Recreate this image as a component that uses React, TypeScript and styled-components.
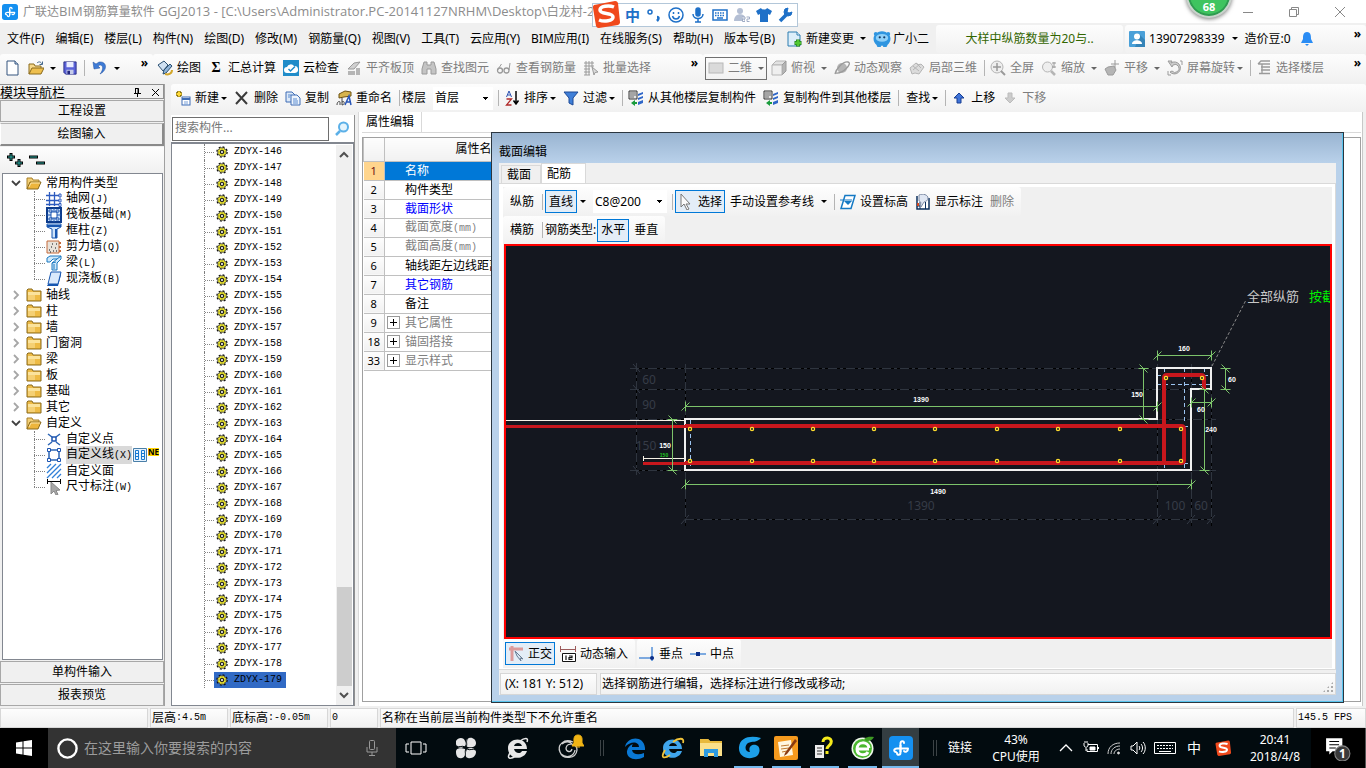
import React from 'react';
import styled, { createGlobalStyle, css } from 'styled-components';

const UI = '"Noto Sans", "Noto Sans CJK SC", sans-serif';
const MONO = '"Liberation Mono", "Noto Sans CJK SC", monospace';

const Global = createGlobalStyle`
  * { box-sizing: border-box; }
  body { margin: 0; background: #f0f0f0; color: #000; font: 12px/16px ${UI}; }
  button, input, select { font: inherit; color: inherit; border: 0; background: none; padding: 0; margin: 0; border-radius: 0; }
  button { white-space: nowrap; }
  ul { list-style: none; margin: 0; padding: 0; }
`;

/* ---------- shared parts ---------- */

const Svg = styled.svg<{ $w?: number; $h?: number }>`
  width: ${p => p.$w ?? 16}px;
  height: ${p => p.$h ?? 16}px;
  flex: none;
  display: block;
`;

const Page = styled.div`
  min-height: 100vh;
  display: flex;
  flex-direction: column;
  overflow: hidden;
`;

const panelFill = 'linear-gradient(#fdfdfd, #f1f1f1)';

const Strip = styled.div<{ $w?: number; $grow?: boolean; $pad?: number; $h?: number }>`
  display: flex;
  align-items: center;
  height: ${p => p.$h ?? 28}px;
  padding-left: ${p => p.$pad ?? 4}px;
  flex: ${p => (p.$grow ? '1 1 0' : 'none')};
  ${p => p.$w && `width: ${p.$w}px;`}
  min-width: 0;
  background: ${panelFill};
  border-radius: 3px;
  overflow: hidden;
`;

const Tool = styled.button<{ $off?: boolean; $gap?: number }>`
  display: flex;
  align-items: center;
  gap: ${p => p.$gap ?? 4}px;
  margin-right: 7px;
  flex: none;
  color: ${p => (p.$off ? '#7d7d7d' : '#000')};
`;

const Sep = styled.span<{ $after?: number }>`
  width: 1px;
  height: 16px;
  flex: none;
  background: #b4b4b4;
  margin-right: ${p => p.$after ?? 5}px;
`;

const CaretBox = styled.span<{ $w: number; $off?: boolean }>`
  width: ${p => p.$w}px;
  margin-left: -4px;
  display: flex;
  justify-content: flex-end;
  &::after {
    content: '';
    border: 3px solid transparent;
    border-bottom: 0;
    border-top-color: ${p => (p.$off ? '#666' : '#000')};
  }
`;
const Caret = ({ w = 8, off }: { w?: number; off?: boolean }) => <CaretBox $w={w} $off={off} />;

const MoreButton = styled.button`
  align-self: flex-start;
  margin: 0 5px 0 auto;
  font: bold 12px/18px ${UI};
`;

const MonoSpan = styled.span`
  font: 10px/16px ${MONO};
`;
const Mixed = ({ children }: { children: string }) => (
  <>{children.split(/([ -~]+)/).filter(Boolean).map((s, i) => (/^[ -~]/.test(s) ? <MonoSpan key={i}>{s}</MonoSpan> : s))}</>
);

/* ---------- icons ---------- */

const G = '#b5b5b5';
const GD = '#9a9a9a';
const art: Record<string, React.ReactNode> = {
  file: <><path d="M2 1h8l3 3v11H2z" fill="#fff" stroke="#34557f" /><path d="M10 1v3h3" fill="#c9d8ea" stroke="#34557f" /></>,
  open: <><path d="M1 14V3h5l1 2h6v3" fill="#f3cf75" stroke="#a8802a" /><path d="M1 14l3-7h11l-3 7z" fill="#edb53c" stroke="#8a6a1c" /><path d="M3 12l2-4h9" fill="none" stroke="#fbe6a8" /></>,
  openfile: <><path d="M1 14V4h5l1 2h6v2" fill="#f6d88a" stroke="#8a6a1c" /><path d="M1 14l3-6h12l-3 6z" fill="#eebf4e" stroke="#8a6a1c" /><path d="M9 3c2-2 4-1 5 1M14.500 1.500v3h-3" fill="none" stroke="#44688c" /></>,
  save: <><path d="M1 1h14v14H3l-2-2z" fill="#5a62d8" stroke="#23277e" /><path d="M4 1h8v6H4z" fill="#e9ecff" /><path d="M4 10h8v5H4z" fill="#c5cbe9" /><path d="M5 11h3v4H5z" fill="#23277e" /></>,
  undo: <path d="M1 2l1 7 6-1-2-2c4-3 7 2 2 8 8-4 7-13-1-12L4 4z" fill="#3e7bd6" stroke="#1f4e9e" strokeWidth=".5" />,
  draw: <><path d="M1 5l6-4 4 4-5 6z" fill="#cfe0f2" stroke="#2b5072" /><path d="M7 10l6-6 2 2-6 7-3 1z" fill="#8fb3d8" stroke="#2b5072" /><path d="M8 14c3 1 7 0 7-4" fill="none" stroke="#d3a72a" strokeWidth="2" /></>,
  cloud: <><rect width="16" height="16" fill="#1f8cc9" /><path d="M4 13a3 3 0 010-6 4 4 0 017-1 3.500 3.500 0 011 7z" fill="#fff" /><path d="M5.500 9l2 2L12 6.500" fill="none" stroke="#1f8cc9" strokeWidth="1.500" /></>,
  level: <><path d="M2 9l6-6 6-1-6 7z" fill="#d0d0d0" stroke={GD} /><path d="M2 11h7v4H2zM10 8h4v7h-4z" fill={G} /></>,
  bino: <path d="M3 2h3v3h4V2h3l2 7v5h-5V9H6v5H1V9z" fill="#c4c4c4" stroke={GD} />,
  glasses: <><circle cx="4" cy="10.500" r="2.500" fill="none" stroke={GD} strokeWidth="1.300" /><circle cx="10.500" cy="10.500" r="2.500" fill="none" stroke={GD} strokeWidth="1.300" /><path d="M1.500 10l4-6M13 10l1-7" fill="none" stroke={GD} /></>,
  batch: <><path d="M1 3h10M1 6h10M1 9h6M1 12h6M1 15h6M3 1v14M6 1v14M9 1v6" stroke={GD} /><path d="M9 7l6 5-3 .5L11 15z" fill="#ddd" stroke={GD} /></>,
  box2d: <rect x="1" y="3" width="14" height="10" fill="#dadada" stroke="#b8b8b8" />,
  cube: <><path d="M1 5l4-4h10l-4 4z" fill="#e2e2e2" stroke={G} /><path d="M11 5l4-4v10l-4 4z" fill={G} stroke={GD} /><path d="M1 5h10v10H1z" fill="#efefef" stroke={G} /></>,
  orbit: <><circle cx="8" cy="8" r="5" fill={G} /><path d="M1 14C2 9 9 1 14 2s-5 12-12 11" fill="none" stroke={GD} strokeWidth="1.300" /></>,
  part3d: <path d="M1 8l6-5 3 2 2-1 3 3-5 7-4-1-3 1z M4 6l6 5M7 3l5 5M4 10l7-6" fill="#dcdcdc" stroke={G} />,
  full: <><circle cx="7" cy="7" r="6" fill="#eee" stroke={G} /><path d="M7 3v8M3 7h8" stroke={GD} strokeWidth="1.500" /><path d="M11 11l4 4" stroke={GD} strokeWidth="2" /></>,
  zoom: <><circle cx="6.500" cy="7" r="5" fill="#eee" stroke={G} /><path d="M10 11l4 4" stroke={G} strokeWidth="2.500" /><path d="M13 2v6M11 3h4M11 7h4" stroke={GD} /></>,
  pan: <><path d="M1 9l3-2 6-1 2 4-3 5H4z" fill={G} stroke={GD} /><path d="M11 0v8M7 4h8" stroke={GD} /></>,
  rotate: <><path d="M1 1h4l-1 2a6 6 0 11-1 9l2-1a4 4 0 101-6l-1 2z" fill="#ccc" stroke={GD} /><path d="M13 1h2v4M1 11v4h3" fill="none" stroke={GD} /></>,
  floors: <path d="M2 4h12M5 7h9M5 10h9M3 13.500h11M2 4l3-3h9M6 4v9" stroke={GD} strokeWidth="1.300" fill="none" />,
  addnew: <><path d="M4 1v6M1 4h6" stroke="#7a6400" strokeWidth="3.500" /><path d="M4 1.500v5M1.500 4h5" stroke="#ffd93a" strokeWidth="2" /><rect x="7" y="7" width="8" height="8" fill="#fff" stroke="#3f6db5" /><path d="M7 9h8" stroke="#3f6db5" strokeWidth="2" /><path d="M9 12h4M9 14h4" stroke="#7aa1d9" /></>,
  del: <path d="M2 2l11 12M13 2L2 14" stroke="#3b3b3b" strokeWidth="2" />,
  copy: <><path d="M1 2h6l3 3v7H1z" fill="#dce9f8" stroke="#3f6db5" /><path d="M6 5h6l3 3v7H6z" fill="#eef5fd" stroke="#3f6db5" /><path d="M8 9h4M8 11h5M8 13h5M3 5h3M3 7h2" stroke="#5b8bd0" /></>,
  rename: <><path d="M3 4l6-3 6 1v4l-7 1-5 1z" fill="#d7b44d" stroke="#6d5212" /><path d="M1 15c0-4 3-4 3-3v3M6 8v7M6 12c3-2 3 3 0 3" fill="none" stroke="#444" /><path d="M9 15l4-9 2 9M10 12h4" fill="none" stroke="#2a57b8" strokeWidth="1.500" /></>,
  sort: <><path d="M2.500 7L5 1l2.500 6M3.500 5h3" fill="none" stroke="#2a50b0" /><path d="M2.500 9h5l-5 6h5" fill="none" stroke="#b02a2a" strokeWidth="1.300" /><path d="M12 1v12M9.500 10.500L12 14l2.500-3.500" fill="none" stroke="#000" strokeWidth="1.500" /></>,
  filter: <path d="M1 2h14l-5 6v7l-4-2V8z" fill="#3f7fd8" stroke="#1e4a96" />,
  floorcopy: <><path d="M1 1h8v8H1z" fill="#e4e4e4" stroke="#333" /><path d="M2 3h6M2 5h6M2 7h4" stroke="#666" /><path d="M10 4l5-2v2l-5 2zM10 8l5-2v2l-5 2zM10 12l5-2v3l-5 2z" fill="#2f66c8" /><path d="M3 13l4-3v2h2v2H7v2z" fill="#1a9c3c" /></>,
  up: <path d="M8 3l5 5h-3v5H6V8H3z" fill="#3f73d8" stroke="#183f93" />,
  down: <path d="M8 13l5-5h-3V3H6v5H3z" fill="#ccc" stroke="#bbb" />,
  newdoc: <><path d="M1 1h9l3 3v11H1z" fill="#dceefa" stroke="#2c7db0" /><path d="M10 1v3h3" fill="#fff" stroke="#2c7db0" /><path d="M11 8.500v7M7.500 12h7" stroke="#1f7a1f" strokeWidth="4" /><path d="M11 9v6M8 12h6" stroke="#52c832" strokeWidth="2.500" /></>,
  mascot: <><path d="M2 4c3-4 9-4 12 0 3 3 1 8-1 9l-1 2H9v-1H7v1H4l-1-2C1 12-1 7 2 4z" fill="#2f95e0" /><circle cx="2.500" cy="3.500" r="1.800" fill="#2f95e0" /><circle cx="13.500" cy="3.500" r="1.800" fill="#2f95e0" /><ellipse cx="8" cy="7" rx="5.500" ry="3.500" fill="#8fd0f8" /><circle cx="6" cy="6.500" r="1" fill="#143b66" /><circle cx="10" cy="6.500" r="1" fill="#143b66" /></>,
  user: <><rect width="16" height="16" rx="1" fill="#4aa0d8" /><path d="M11 4l5 5v7H6z" fill="#3584b8" /><circle cx="8" cy="5.500" r="3" fill="#fff" /><path d="M3 13c0-5 10-5 10 0z" fill="#fff" /></>,
  bell: <path d="M8 1c4 0 4 4 4 7l2 4H2l2-4c0-3 0-7 4-7zM6 13h4l-2 2z" fill="#2a8cf4" />,
  axis: <><path d="M3.500 1v14M8.500 1v14M0 4.500h13M0 9.500h13M0 13.500h13" stroke="#2d5bbf" strokeWidth="1.300" /><path d="M13 3h2v3h-2zM13 8h2v3h-2zM13 12.500h2v3h-2z" fill="#fff" stroke="#2d5bbf" /></>,
  raft: <><path d="M1 1h14v14H1z" fill="#cfe4fb" stroke="#0d3c8c" strokeWidth="2" /><path d="M5 5h6v6H5zM8 1v4M8 11v4M1 8h4M11 8h4M3 3h3v2H3zM10 3h3v2h-3zM3 11h3v2H3zM10 11h3v2h-3z" fill="#fff" stroke="#1d54b0" /></>,
  column: <><path d="M1 1h14v3l-4 2v9H6V6L1 4z" fill="#cfe4fb" stroke="#1756b0" /><path d="M1 3h14M10 6v9" stroke="#1756b0" strokeWidth="2" /></>,
  wall: <><path d="M1 2h12v12H1z" fill="#e8e2da" stroke="#c46a3a" /><path d="M3 11h1M5 8h1M7 12h1M9 9h1M10 5h1M6 5h1M4 13h1M10 12h1" stroke="#555" strokeWidth="1.500" /><path d="M14 3v2M14 7v2M14 11v2" stroke="#c46a3a" strokeWidth="2" /></>,
  beam: <path d="M1 3l3-2h11v3l-4 4v7H6V8l5-4H7L4 7H1zM11 4l4-3M6 8l4-1M8 9v5" fill="#cfe9fb" stroke="#1a78c0" />,
  slab: <><path d="M5 1h10l-3 12H2z" fill="#dbe9fb" stroke="#1756b0" /><path d="M2 13h10l3-12v3l-3 11H1z" fill="#1756b0" /></>,
  point: <><path d="M2 3l4 3M14 3l-4 3M2 14l4-3M14 14l-4-3" stroke="#2c65b5" strokeWidth="1.500" /><path d="M6 6h4v4H6z" fill="#fff" stroke="#1d54b0" strokeWidth="1.500" /></>,
  line: <><path d="M3 3h10v10H3z" fill="none" stroke="#2c65b5" strokeWidth="1.500" /><path d="M1.500 1.500h3v3h-3zM11.500 1.500h3v3h-3zM1.500 11.500h3v3h-3zM11.500 11.500h3v3h-3z" fill="#fff" stroke="#1d54b0" /></>,
  area: <path d="M1 5l4-4M1 10l9-9M1 15L15 1M6 15l9-9M11 15l4-4" stroke="#2f7fd8" strokeWidth="1.300" />,
  dimen: <><path d="M1.500 0v5M14.500 0v5M1 2.500h13" stroke="#000" /><path d="M5 3l9 8-4 .5 2 4-2 .5-2-4-3 3z" fill="#a8a8a8" stroke="#888" /></>,
  folder: <><path d="M1 14V3l1-1h4l1 2h8v10z" fill="#eebb45" stroke="#8a6a1c" /><path d="M2 5h12v3H2z" fill="#fbe39c" /><path d="M2 8h7v5H2z" fill="#f5d074" /></>,
  gear: <><circle cx="8" cy="8" r="5.800" fill="none" stroke="#111" strokeWidth="1.600" strokeDasharray="2.300 2.250" /><circle cx="8" cy="8" r="5" fill="#f5ee22" stroke="#444" strokeWidth=".8" /><path d="M8 3v10M3 8h10M4.500 4.500l7 7M11.500 4.500l-7 7" stroke="#555" strokeWidth=".6" /><circle cx="8" cy="8" r="1.800" fill="#fff" stroke="#111" strokeWidth="1.200" /></>,
  search: <><circle cx="9.500" cy="6" r="4.500" fill="#e4f4fd" stroke="#5bb0e8" strokeWidth="2" /><path d="M6 10l-4 4" stroke="#5bb0e8" strokeWidth="2.500" /></>,
  cursor: <path d="M3 0v13l3-3 3 6 2-1-3-5h4z" fill="#fafafa" stroke="#777" />,
  elev: <><path d="M5 1.500h10l-4 13H1z" fill="#fff" stroke="#1479c4" strokeWidth="1.500" /><path d="M0 6h12" stroke="#1479c4" /><path d="M4 7h8l-4 4z" fill="#1479c4" /></>,
  label: <><path d="M2 2v13h12V4" fill="#fff" stroke="#0b2f5c" strokeWidth="1.500" /><path d="M2 12h3M5 8v7M10.500 8v7" stroke="#0b2f5c" /><path d="M4 1c4-2 9 0 9 3s-2 3-4 4l-3 5c-1-4 1-5-2-6z" fill="#dfe6f2" stroke="#7f8ca5" /><path d="M2 9h2v3H2z" fill="#d2461e" /></>,
  ortho: <><path d="M1 3h14M4 0v15" stroke="#dc9a9a" strokeWidth="3" /><path d="M7 5l8 8-3-1 1 3-4-5z" fill="#d8e4f0" stroke="#6a7f96" /></>,
  dyn: <><path d="M.5 0v6M15.500 0v6M0 3.500h16" stroke="#9c5a5a" /><path d="M2.500 7.500h13v8h-13z" fill="#fff" stroke="#111" /><path d="M6 9.500v4.500M9 10h3v1.700H9v1.800h3.500" fill="none" stroke="#111" strokeWidth="1.200" /></>,
  perp: <><path d="M0 12h15M13 1v14" stroke="#5590d8" strokeWidth="1.500" /><circle cx="13" cy="12" r="2" fill="#0b2f8a" /></>,
  mid: <><path d="M0 8h16" stroke="#5590d8" strokeWidth="1.500" /><rect x="6" y="6" width="4" height="4" fill="#0b2f8a" /></>,
};
const Icon = ({ n, s = 16 }: { n: string; s?: number }) => (
  <Svg viewBox="0 0 16 16" $w={s} $h={s} aria-hidden="true">{art[n]}</Svg>
);

/* ---------- title bar ---------- */

const TitleBar = styled.header`
  position: relative;
  height: 23px;
  flex: none;
  background: #fff;
  display: flex;
  align-items: center;
  gap: 5px;
  padding-left: 2px;
  color: #8c8c8c;
`;
const TitleText = styled.span`
  white-space: nowrap;
`;
const TitleLatin = styled.span`
  font: 13px/16px "Open Sans", sans-serif;
`;
const WindowButtons = styled.div`
  margin-left: auto;
  display: flex;
  gap: 30px;
  padding-right: 18px;
`;
const InputBar = styled.div`
  position: absolute;
  z-index: 3;
  left: 592px;
  top: 3px;
  width: 206px;
  height: 24px;
  padding-left: 32px;
  display: flex;
  align-items: center;
  gap: 6px;
  background: #fff;
  border: 1px solid #b3c7d9;
  color: #1e70c8;
  font-weight: bold;
  font-size: 15px;
`;
const SogouBig = styled.div`
  position: absolute;
  left: -1px;
  top: -4px;
`;
const Ball = styled.div`
  position: absolute;
  z-index: 3;
  right: 134px;
  top: -28px;
  width: 46px;
  height: 46px;
  border-radius: 50%;
  background: #3fc45f;
  border: 2px solid #c9d3cc;
  box-shadow: 0 1px 4px #777, inset 0 0 0 2px #2f9a50;
  color: #fff;
  text-align: center;
  font: bold 11px/16px ${UI};
  padding-top: 25px;
`;

const SogouMark = ({ size }: { size: number }) => (
  <Svg viewBox="0 0 28 28" $w={size} $h={size}>
    <path d="M2 5l21-4a3 3 0 013 2l2 19a3 3 0 01-2 3L7 28a3 3 0 01-3-2L1 8a3 3 0 011-3z" fill="#f0491c" />
    <path d="M22 7c-5-2-14-1-14 3 0 5 13 2 13 7 0 4-9 5-14 3" fill="none" stroke="#fff" strokeWidth="3.500" />
  </Svg>
);
const AppMark = ({ size }: { size: number }) => (
  <Svg viewBox="0 0 24 24" $w={size} $h={size}>
    <rect width="24" height="24" rx="4" fill="#1590f0" />
    <path d="M15 7C15 4.500 11.500 4.500 11.500 7.500V16.500C11.500 19.500 8 19.500 8 17M19 12.500H8C4.500 12.500 4.500 16 7 16M19 12.500C19 16 16 16.500 15 15" fill="none" stroke="#fff" strokeWidth="2" strokeLinecap="round" />
    <path d="M11.500 9v7" stroke="#fff" strokeWidth="2" />
  </Svg>
);

const TopBar = () => (
  <TitleBar>
    <AppMark size={16} />
    <TitleText>
      广联达<TitleLatin>BIM</TitleLatin>钢筋算量软件
      <TitleLatin> GGJ2013 - [C:\Users\Administrator.PC-20141127NRHM\Desktop\</TitleLatin>白龙村<TitleLatin>-20</TitleLatin>
    </TitleText>
    <InputBar>
      <SogouBig><SogouMark size={28} /></SogouBig>
      <span>中</span>
      <Svg viewBox="0 0 16 16" fill="none" stroke="#1e70c8" strokeWidth="1.500"><circle cx="4" cy="5" r="2" /><path d="M11 10c2 0 2 2 0 4" strokeWidth="2.500" /></Svg>
      <Svg viewBox="0 0 16 16" fill="none" stroke="#1e70c8" strokeWidth="1.500"><circle cx="8" cy="8" r="7" /><path d="M4.500 9c1 4 6 4 7 0M5.500 5v2M10.500 5v2" /></Svg>
      <Svg viewBox="0 0 16 16" fill="none" stroke="#1e70c8" strokeWidth="1.500"><rect x="6" y="1" width="4" height="8" rx="2" fill="#1e70c8" /><path d="M3 7c0 6 10 6 10 0M8 12v3M5 15h6" /></Svg>
      <Svg viewBox="0 0 16 16" fill="none" stroke="#1e70c8" strokeWidth="1.500"><rect x="1" y="3" width="14" height="10" /><path d="M3 6h10M3 8.500h10" strokeDasharray="1.500 1" /><path d="M5 11h6" /></Svg>
      <Svg viewBox="0 0 16 16" fill="#b4bfd4"><circle cx="6" cy="4" r="3" /><path d="M0 14c0-9 11-8 11-3v3z" /><path d="M8 10h3v2H8.500v2.500H11M12.500 10h3v2H13v2.500h2.500" fill="#fff" stroke="#9fabc4" /></Svg>
      <Svg viewBox="0 0 16 16" fill="#1e70c8"><path d="M5 1c1 2 5 2 6 0l5 3-2 4-2-1v8H4V7L2 8 0 4z" /></Svg>
      <Svg viewBox="0 0 16 16" fill="none" stroke="#1e70c8"><path d="M2 14l6-6" strokeWidth="3.500" /><path d="M14 5a4 4 0 11-4-4l-1 4 2 1z" fill="#1e70c8" /></Svg>
    </InputBar>
    <Ball>68</Ball>
    <WindowButtons>
      <button aria-label="最小化"><Svg viewBox="0 0 16 16" stroke="#888"><path d="M3 8.500h10" /></Svg></button>
      <button aria-label="还原"><Svg viewBox="0 0 16 16" stroke="#888" fill="none"><path d="M3.500 5.500h7v7h-7zM5.500 5V3.500h7v7H11" /></Svg></button>
      <button aria-label="关闭"><Svg viewBox="0 0 16 16" stroke="#888"><path d="M3 3l10 10M13 3L3 13" /></Svg></button>
    </WindowButtons>
  </TitleBar>
);

/* ---------- menu and tool bars ---------- */

const MenuRow = styled.nav`
  height: 31px;
  flex: none;
  display: flex;
  align-items: center;
  padding-left: 7px;
`;
const MenuItems = styled.div`
  display: flex;
  gap: 11px;
  margin-right: 12px;
`;
const Tip = styled(Strip)`
  width: 187px;
  justify-content: center;
  padding: 0;
  margin: 0 2px 0 0;
  color: #336600;
`;
const BarRow = styled.div`
  display: flex;
  flex: none;
  height: 30px;
`;
const DimBox = styled.button`
  display: flex;
  align-items: center;
  gap: 4px;
  width: 62px;
  height: 23px;
  margin-right: 4px;
  padding-left: 2px;
  flex: none;
  border: 1px solid #707070;
  color: #7d7d7d;
`;
const Picker = styled.select<{ $w: number }>`
  appearance: none;
  width: ${p => p.$w}px;
  height: 23px;
  padding: 0 2px;
  margin-right: 5px;
  flex: none;
  background: linear-gradient(#000, #000) right 5px top 10px / 5px 1px no-repeat,
    linear-gradient(#000, #000) right 6px top 11px / 3px 1px no-repeat,
    linear-gradient(#000, #000) right 7px top 12px / 1px 1px no-repeat, #fff;
`;

const menus = ['文件(F)', '编辑(E)', '楼层(L)', '构件(N)', '绘图(D)', '修改(M)', '钢筋量(Q)', '视图(V)', '工具(T)', '云应用(Y)', 'BIM应用(I)', '在线服务(S)', '帮助(H)', '版本号(B)'];

const Menu = () => (
  <MenuRow>
    <MenuItems>{menus.map(m => <button key={m}>{m}</button>)}</MenuItems>
    <Tool $gap={3}><Icon n="newdoc" /><span>新建变更</span><Caret w={13} /></Tool>
    <Tool $gap={2}><Icon n="mascot" s={18} />广小二</Tool>
    <Tip>大样中纵筋数量为20与..</Tip>
    <Strip $grow>
      <Tool><Icon n="user" /><span>13907298339</span><Caret w={13} /></Tool>
      <Tool $gap={8}>造价豆:0<Icon n="bell" /></Tool>
      <MoreButton>»</MoreButton>
    </Strip>
  </MenuRow>
);

type T = [string, string, number?];
const editTools: T[] = [['draw', '绘图'], ['sum', '汇总计算'], ['cloud', '云检查']];
const offTools: T[] = [['level', '平齐板顶'], ['bino', '查找图元'], ['glasses', '查看钢筋量'], ['batch', '批量选择']];
const SumGlyph = styled.span`
  width: 16px;
  text-align: center;
  font: bold 14px/16px "Liberation Serif", serif;
`;

const ToolButton = ({ t: [icon, text, caret], off }: { t: T; off?: boolean }) => (
  <Tool $off={off}>
    {icon === 'sum' ? <SumGlyph>Σ</SumGlyph> : <Icon n={icon} />}
    <span>{text}</span>
    {caret && <Caret w={caret} off={off} />}
  </Tool>
);

const MainTools = () => (
  <BarRow>
    <Strip $w={153} $pad={5}>
      <Tool aria-label="新建"><Icon n="file" /></Tool>
      <Tool aria-label="打开" $gap={8}><Icon n="openfile" /><Caret w={8} /></Tool>
      <Tool aria-label="保存"><Icon n="save" s={14} /></Tool>
      <Sep $after={7} />
      <Tool aria-label="撤销" $gap={8}><Icon n="undo" /><Caret w={8} /></Tool>
      <MoreButton>»</MoreButton>
    </Strip>
    <Strip $w={550}>
      {editTools.map(t => <ToolButton key={t[1]} t={t} />)}
      {offTools.map(t => <ToolButton key={t[1]} t={t} off />)}
      <MoreButton>»</MoreButton>
    </Strip>
    <Strip $grow $pad={2}>
      <DimBox><Icon n="box2d" /><span>二维</span><Caret w={12} off /></DimBox>
      <ToolButton off t={['cube', '俯视', 12]} />
      <ToolButton off t={['orbit', '动态观察']} />
      <ToolButton off t={['part3d', '局部三维']} />
      <Sep />
      <ToolButton off t={['full', '全屏']} />
      <ToolButton off t={['zoom', '缩放', 12]} />
      <ToolButton off t={['pan', '平移', 12]} />
      <ToolButton off t={['rotate', '屏幕旋转', 8]} />
      <Sep />
      <ToolButton off t={['floors', '选择楼层']} />
      <MoreButton>»</MoreButton>
    </Strip>
  </BarRow>
);

const PartTools = () => (
  <Strip $h={28}>
    <ToolButton t={['addnew', '新建', 8]} />
    <ToolButton t={['del', '删除']} />
    <ToolButton t={['copy', '复制']} />
    <ToolButton t={['rename', '重命名']} />
    <Sep $after={2} />
    <Tool as="label" htmlFor="floor">楼层</Tool>
    <Picker id="floor" $w={60}><option>首层</option></Picker>
    <Sep />
    <ToolButton t={['sort', '排序', 8]} />
    <ToolButton t={['filter', '过滤', 8]} />
    <Sep />
    <ToolButton t={['floorcopy', '从其他楼层复制构件']} />
    <ToolButton t={['floorcopy', '复制构件到其他楼层']} />
    <Sep $after={7} />
    <Tool><span>查找</span><Caret /></Tool>
    <Sep />
    <ToolButton t={['up', '上移']} />
    <ToolButton off t={['down', '下移']} />
  </Strip>
);

/* ---------- navigation panel ---------- */

const Main = styled.div`
  flex: 1;
  display: flex;
  gap: 6px;
  min-height: 0;
`;
const Nav = styled.aside`
  width: 165px;
  flex: none;
  display: flex;
  flex-direction: column;
  gap: 1px;
  border-right: 1px solid #a0a0a0;
`;
const NavTitle = styled.div`
  height: 15px;
  display: flex;
  align-items: center;
  border: 1px solid #909090;
  border-left: 0;
  padding-right: 2px;
  font-size: 13px;
  button:first-of-type { margin-left: auto; margin-right: 6px; }
`;
const NavButton = styled.button<{ $on?: boolean }>`
  height: ${p => (p.$on ? 23 : 22)}px;
  flex: none;
  border: 1px solid #a8a8a8;
  ${p => p.$on && css`border-width: 1px 2px 2px 1px; border-color: #b5b5b5 #8a8a8a #8a8a8a #fff;`}
  background: #f0f0f0;
`;
const NavTools = styled.div`
  height: 25px;
  flex: none;
  display: flex;
  align-items: center;
  gap: 6px;
  padding-left: 7px;
  background: ${panelFill};
`;
const Tree = styled.ul`
  flex: 1;
  margin: 0 1px 0 2px;
  padding-top: 1px;
  border: 1px solid #828790;
  background: #fff;
`;
const Node = styled.li<{ $leaf?: boolean; $last?: boolean }>`
  position: relative;
  display: flex;
  align-items: center;
  gap: 4px;
  height: 16px;
  padding-left: ${p => (p.$leaf ? 43 : 7)}px;
  white-space: nowrap;
  ${p => p.$leaf && css`
    background: repeating-linear-gradient(90deg, #808080 0 1px, transparent 1px 2px) 31px 8px / 11px 1px no-repeat;
    &::before {
      content: '';
      position: absolute;
      left: 31px;
      top: 0;
      height: ${p.$last ? 8 : 16}px;
      border-left: 1px dotted #808080;
    }
  `}
`;
const NodeLabel = styled.span<{ $on?: boolean }>`
  ${p => p.$on && css`background: #d9d9d9;`}
`;
const Chevron = ({ open }: { open?: boolean }) => (
  <Svg viewBox="0 0 12 12" $w={12} $h={12} fill="none" strokeWidth="1.800" stroke={open ? '#404040' : '#a6a6a6'}>
    <path d={open ? 'M2 4l4 4 4-4' : 'M4 2l4 4-4 4'} />
  </Svg>
);
const NewFlag = styled.span`
  font: bold 8px/8px ${UI};
  background: #ffd200;
  margin: 0 0 6px -3px;
`;

const common: [string, string][] = [['axis', '轴网(J)'], ['raft', '筏板基础(M)'], ['column', '框柱(Z)'], ['wall', '剪力墙(Q)'], ['beam', '梁(L)'], ['slab', '现浇板(B)']];
const closed = ['轴线', '柱', '墙', '门窗洞', '梁', '板', '基础', '其它'];
const custom: [string, string][] = [['point', '自定义点'], ['line', '自定义线(X)'], ['area', '自定义面'], ['dimen', '尺寸标注(W)']];

const Leaves = ({ items }: { items: [string, string][] }) => (
  <>{items.map(([icon, text], i) => (
    <Node key={text} $leaf $last={i === items.length - 1}>
      <Icon n={icon} />
      <NodeLabel $on={icon === 'line'}><Mixed>{text}</Mixed></NodeLabel>
      {icon === 'line' && <>
        <PairMark />
        <NewFlag>NE</NewFlag>
      </>}
    </Node>
  ))}</>
);
const PairSvg = styled(Svg)`
  margin-left: -3px;
`;
const PairMark = () => (
  <PairSvg viewBox="0 0 14 14" $w={14} $h={14} fill="#e6f3ff" stroke="#1779d0">
    <path d="M.5.5h13v13H.5z" stroke="#4a7fa8" /><path d="M2.500 2.500h3v9h-3zM8.500 2.500h3v9h-3zM2.500 5.500h3M8.500 5.500h3M2.500 8.500h3M8.500 8.500h3" />
  </PairSvg>
);

const NavPanel = () => (
  <Nav>
    <NavTitle>
      模块导航栏
      <button aria-label="固定"><Svg viewBox="0 0 12 12" $w={12} $h={12} stroke="#000" fill="none"><path d="M4.500 2.500h3v5M4.500 2v5M7 2.500v5M3 7.500h7M6.500 8v3" /></Svg></button>
      <button aria-label="关闭"><Svg viewBox="0 0 12 12" $w={12} $h={12} stroke="#000"><path d="M3 3l7 7M10 3l-7 7" /></Svg></button>
    </NavTitle>
    <NavButton>工程设置</NavButton>
    <NavButton $on>绘图输入</NavButton>
    <NavTools>
      <button aria-label="全部展开"><Svg viewBox="0 0 16 16"><path d="M4 1v8M0 5h8M12 7v8M8 11h8" stroke="#000" strokeWidth="3" /><path d="M4 2v6M1 5h6M12 8v6M9 11h6" stroke="#2aa8a0" /></Svg></button>
      <button aria-label="全部折叠"><Svg viewBox="0 0 16 16"><path d="M0 5h9M7 11h9" stroke="#000" strokeWidth="3" /><path d="M1 5h7M8 11h7" stroke="#2aa8a0" /></Svg></button>
    </NavTools>
    <Tree>
      <Node><Chevron open /><Icon n="open" /><Mixed>常用构件类型</Mixed></Node>
      <Leaves items={common} />
      {closed.map(c => <Node key={c}><Chevron /><Icon n="folder" />{c}</Node>)}
      <Node><Chevron open /><Icon n="open" />自定义</Node>
      <Leaves items={custom} />
    </Tree>
    <NavButton>单构件输入</NavButton>
    <NavButton>报表预览</NavButton>
  </Nav>
);

/* ---------- component list ---------- */

const Work = styled.div`
  flex: 1;
  min-width: 0;
  display: flex;
  flex-direction: column;
`;
const Columns = styled.div`
  flex: 1;
  display: flex;
  min-height: 0;
`;
const Parts = styled.section`
  width: 184px;
  margin: 3px 3px 0 0;
  flex: none;
  display: flex;
  flex-direction: column;
  border-right: 1px solid #909090;
`;
const SearchRow = styled.div`
  display: flex;
  align-items: center;
  gap: 5px;
  height: 27px;
  padding: 2px 1px 1px;
  background: #fff;
  input {
    width: 157px;
    height: 24px;
    border: 1px solid #6e6e6e;
    padding: 0 2px 4px;
    font-size: 12px;
  }
  input::placeholder { color: #777; opacity: 1; }
`;
const ListBox = styled.div`
  flex: 1;
  display: flex;
  border: 1px solid #828790;
  border-top-width: 2px;
  background: #fff;
`;
const PartList = styled.ul`
  flex: 1;
`;
const PartRow = styled.li<{ $on?: boolean }>`
  display: flex;
  height: 16px;
  margin-left: 32px;
  padding-left: 9px;
  border-left: 1px dotted #808080;
  background: linear-gradient(90deg, #888 50%, transparent 0) 0 8px / 2px 1px repeat-x;
  button {
    display: flex;
    align-items: center;
    gap: 5px;
    padding: 0 4px 0 1px;
    font: 10px/16px ${MONO};
    background: ${p => (p.$on ? '#316ac5' : '#fff')};
    flex: none;
  }
  &::after { content: ''; flex: 1; background: #fff; }
`;
const Scroll = styled.div`
  width: 16px;
  margin: 1px 1px 0 0;
  display: flex;
  flex-direction: column;
  align-items: center;
  justify-content: space-between;
  background: #f0f0f0;
  padding: 4px 0;
`;
const Thumb = styled.span`
  width: 15px;
  height: 99px;
  margin: auto 0 3px;
  background: #cdcdcd;
`;

const PartsPanel = () => (
  <Parts>
    <SearchRow><input aria-label="搜索构件" placeholder="搜索构件..." /><button aria-label="搜索"><Icon n="search" /></button></SearchRow>
    <ListBox>
      <PartList>
        {Array.from({ length: 34 }, (_, i) => (
          <PartRow key={i} $on={i === 33}><button><Icon n="gear" s={14} />ZDYX-{146 + i}</button></PartRow>
        ))}
      </PartList>
      <Scroll>
        <Svg viewBox="0 0 12 12" $w={12} $h={12} fill="none" stroke="#505050" strokeWidth="2"><path d="M2 8l4-4 4 4" /></Svg>
        <Thumb />
        <Svg viewBox="0 0 12 12" $w={12} $h={12} fill="none" stroke="#505050" strokeWidth="2"><path d="M2 4l4 4 4-4" /></Svg>
      </Scroll>
    </ListBox>
  </Parts>
);

/* ---------- property grid ---------- */

const Props = styled.section`
  position: relative;
  flex: 1;
  min-width: 0;
  margin: 0 3px 0 0;
  display: flex;
  flex-direction: column;
  background: #fff;
  border-left: 1px solid #d9d9d9;
  border-right: 1px solid #c8c8c8;
`;
const PropTab = styled.button`
  align-self: flex-start;
  height: 20px;
  padding: 0 7px;
  border-right: 1px solid #d9d9d9;
`;
const GridFrame = styled.div`
  flex: 1;
  margin: 5px 1px 4px 3px;
  border: 1px solid #a0a0a0;
  box-shadow: 0 -4px 0 #fff, 0 -5px 0 #d9d9d9;
`;
const Grid = styled.table`
  border-collapse: collapse;
  width: 211px;
  table-layout: fixed;
  th, td { height: 19px; padding: 0; border: 1px solid #c0c0c0; border-top: 0; font-weight: normal; }
  th { width: 21px; border-left: 0; background: ${panelFill}; font-size: 11px; text-align: center; }
  thead th { height: 23px; font-size: 12px; border-left: 1px solid #c0c0c0; }
  thead th + th { width: 190px; }
`;
const PropCell = styled.td<{ $tone?: string; $on?: boolean }>`
  color: ${p => p.$tone ?? '#000'};
  background: ${p => (p.$on ? '#0078d7' : '#fff')};
  div { display: flex; align-items: center; padding-left: 20px; white-space: nowrap; }
`;
const RowHead = styled.th<{ $on?: boolean }>`
  ${p => p.$on && css`&& { background: #ffd58d; color: #701010; }`}
`;
const Plus = styled.button`
  width: 13px;
  height: 13px;
  margin: 0 5px 0 -18px;
  border: 1px solid #999;
  background: linear-gradient(#000, #000) 2px 5px / 7px 1px no-repeat, linear-gradient(#000, #000) 5px 2px / 1px 7px no-repeat;
`;

const GRAY = '#808080';
const rows: [number, string, string?][] = [
  [1, '名称', '#fff'], [2, '构件类型'], [3, '截面形状', '#00f'], [4, '截面宽度(mm)', GRAY], [5, '截面高度(mm)', GRAY],
  [6, '轴线距左边线距离'], [7, '其它钢筋', '#00f'], [8, '备注'], [9, '其它属性', GRAY], [18, '锚固搭接', GRAY], [33, '显示样式', GRAY],
];

/* ---------- section editor window ---------- */

const Dialog = styled.section`
  position: absolute;
  left: 132px;
  right: 18px;
  top: 20px;
  bottom: 3px;
  display: flex;
  flex-direction: column;
  border: 1px solid #2b3640;
  padding: 0 7px 7px;
  background: linear-gradient(#99b4d1, #b9d1ea 30px);
  box-shadow: inset -1px -1px 0 #58c4ee;
`;
const DialogTitle = styled.h2`
  margin: 0;
  height: 30px;
  padding-top: 11px;
  font: 12px/16px ${UI};
`;
const Client = styled.div`
  flex: 1;
  min-height: 0;
  display: flex;
  flex-direction: column;
  background: #f0f0f0;
`;
const Tabs = styled.div`
  display: flex;
  align-items: flex-end;
  height: 20px;
  padding-left: 2px;
`;
const Tab = styled.button<{ $on?: boolean }>`
  width: ${p => (p.$on ? 45 : 40)}px;
  height: ${p => (p.$on ? 21 : 18)}px;
  margin-bottom: ${p => (p.$on ? -1 : 0)}px;
  text-align: left;
  text-indent: 5px;
  border: 1px solid #d9d9d9;
  border-bottom: 0;
  background: ${p => (p.$on ? '#fff' : '#f0f0f0')};
`;
const TabPage = styled.div`
  flex: 1;
  min-height: 0;
  display: flex;
  flex-direction: column;
  border: 1px solid #d9d9d9;
  border-left: 0;
  padding: 3px 3px 1px 4px;
  background: #fff;
`;
const PageInner = styled.div`
  flex: 1;
  min-height: 0;
  display: flex;
  flex-direction: column;
  background: #f0f0f0;
`;
const ToolLine = styled.div`
  display: flex;
  gap: 2px;
  height: 29px;
  flex: none;
`;
const Toggle = styled.button<{ $pad?: number }>`
  display: flex;
  align-items: center;
  gap: 4px;
  height: 23px;
  padding: 0 ${p => p.$pad ?? 3}px;
  margin-right: 5px;
  flex: none;
  border: 1px solid #0078d7;
  background: #e3edf7;
`;
const Label = styled.span<{ $after: number }>`
  margin-right: ${p => p.$after}px;
  flex: none;
`;
const Canvas = styled.div`
  flex: 1;
  min-height: 0;
  margin: -1px 0 0 1px;
  border: 2px solid #f00;
  background: #14171f;
  overflow: hidden;
  svg { display: block; width: 100%; height: 100%; }
`;
const StatusLine = styled.div`
  display: flex;
  gap: 3px;
  height: 22px;
  margin: 3px 0 0 1px;
  flex: none;
`;
const StatusCell = styled.div<{ $w?: number }>`
  ${p => (p.$w ? `width: ${p.$w}px; flex: none;` : 'flex: 1;')}
  display: flex;
  align-items: center;
  border: 1px solid #d7d7d7;
  background: ${panelFill};
  padding-left: 1px;
  white-space: nowrap;
`;
const Grip = styled.span`
  margin: auto 1px 1px auto;
  width: 12px;
  height: 12px;
  background: radial-gradient(#aaa 1px, transparent 0) 0 0 / 4px 4px;
  clip-path: polygon(100% 0, 100% 100%, 0 100%);
`;

type Dim = { v?: boolean; at: number; a: number; b: number; label: string; x: number; y: number };
const dims: Dim[] = [
  { at: 406.5, a: 685.5, b: 1157.5, label: '1390', x: 921, y: 402 },
  { at: 484.5, a: 685.5, b: 1191.5, label: '1490', x: 938, y: 494 },
  { at: 355.5, a: 1157.5, b: 1211.5, label: '160', x: 1184, y: 351 },
  { at: 402.5, a: 1191.5, b: 1211.5, label: '60', x: 1201, y: 412 },
  { v: true, at: 1143.5, a: 368.5, b: 419.5, label: '150', x: 1137, y: 397 },
  { v: true, at: 1225.5, a: 368.5, b: 389.5, label: '60', x: 1232, y: 382 },
  { v: true, at: 1204.5, a: 389.5, b: 470.5, label: '240', x: 1211, y: 432 },
  { v: true, at: 672.5, a: 419.5, b: 470.5, label: '150', x: 665, y: 448 },
];
const dimPath = ({ v, at, a, b }: Dim) =>
  v
    ? `M${at} ${a}V${b}` + [a, b].map(p => `M${at - 5} ${p}h10M${at - 4} ${p - 4}l8 8`).join('')
    : `M${a} ${at}H${b}` + [a, b].map(p => `M${p} ${at - 5}v10M${p - 4} ${at + 4}l8 -8`).join('');

const ghostLines = 'M630 368.500H1211M630 389.500H1211M630 419.500H685M630 470.500H685M685 519.500H1211M636.500 363V475M685.500 364V526M1157.500 364V526M1191.500 364V526M1211.500 364V526M1157 419.500H1216M1191 470.500H1216';
const ghostTicks = [368, 389, 470].map(y => `M633 ${y - 4}l7 8`).join('') + [685, 1157, 1191, 1211].map(x => `M${x - 4} 524l8 -9`).join('');
const barX = [690, 752, 813, 874, 935, 997, 1058, 1120, 1181];
const bars = [...barX.map(x => [x, 429]), ...barX.map(x => [x, 461]), [1166, 378], [1202, 378]];

const Drawing = () => (
  <svg role="img" aria-label="截面配筋图">
    <g transform="translate(-506 -246)" fill="none">
      <path d={ghostLines} stroke="#000" />
      <path d={ghostLines} stroke="#2f353f" strokeDasharray="9 3 3 3" />
      <path d={ghostTicks} stroke="#343a46" />
      <g fill="#363c47" fontFamily="Noto Sans, sans-serif" fontSize="12" textAnchor="middle">
        <text x="649" y="384">60</text><text x="649" y="409">90</text><text x="646" y="450">150</text>
        <text x="921" y="510">1390</text><text x="1175" y="510">100</text><text x="1201" y="510">60</text>
      </g>
      <path d="M1212 366L1246 300" stroke="#8a8a8a" strokeDasharray="3 2" />
      <path d="M690.500 420V470M1164.500 368V375M1164.500 464V470M1184.500 368V424M1184.500 464V470M1204.500 368V389M1157 384.500H1211M1157 375.500H1164M1204 375.500H1211M1184 426.500H1191M1184 463.500H1191" stroke="#9cc4f0" strokeDasharray="4 3" />
      <path d="M506 420.500H685M643 458.500H685M643.500 456v5" stroke="#f6f1e6" />
      <path d="M685 419H1157V368H1211V389H1191V470H685Z" stroke="#f0f0f0" strokeWidth="2" />
      <g stroke="#c8171d" strokeLinejoin="round">
        <path d="M506 426.500H686M643 463.500H686" strokeWidth="3" />
        <path d="M685 426H1181Q1184 426 1184 429V460Q1184 463 1181 463H685" strokeWidth="4" />
        <path d="M1164 463V378Q1164 375 1167 375H1201Q1204 375 1204 378V389" strokeWidth="4" />
      </g>
      {dims.map(d => <path key={d.label + d.at} d={dimPath(d)} stroke="#7cc36a" />)}
      <g fill="#fff" fontFamily="Liberation Sans, sans-serif" fontSize="7" fontWeight="bold" textAnchor="middle">
        {dims.map(d => <text key={d.label + d.at} x={d.x} y={d.y}>{d.label}</text>)}
        <text x="664" y="457" fontSize="5" fill="#1fc81f">150</text>
      </g>
      {bars.map(([x, y]) => <circle key={`${x}-${y}`} cx={x} cy={y} r="1.600" fill="#14171f" stroke="#ffdc2e" strokeWidth="1.300" />)}
      <g fontFamily="Noto Sans CJK SC, sans-serif" fontSize="13">
        <text x="1247" y="301" fill="#c8c8c8">全部纵筋</text>
        <text x="1309" y="301" fill="#00f000">按截</text>
      </g>
    </g>
  </svg>
);

const SectionEditor = () => (
  <Dialog>
    <DialogTitle>截面编辑</DialogTitle>
    <Client>
      <Tabs><Tab>截面</Tab><Tab $on>配筋</Tab></Tabs>
      <TabPage>
        <PageInner>
          <ToolLine>
            <Strip $pad={7} $h={29}>
              <Label $after={8}>纵筋</Label>
              <Sep $after={2} />
              <Toggle>直线</Toggle>
              <Tool aria-label="线型"><Caret w={8} /></Tool>
              <Picker aria-label="钢筋规格" $w={74}><option>C8@200</option></Picker>
              <Sep $after={2} />
              <Toggle $pad={2}><Icon n="cursor" />选择</Toggle>
              <Tool><span>手动设置参考线</span><Caret w={13} /></Tool>
              <Sep />
              <Tool><Icon n="elev" />设置标高</Tool>
              <Tool><Icon n="label" />显示标注</Tool>
              <Tool $off>删除</Tool>
            </Strip>
          </ToolLine>
          <ToolLine>
            <Strip $pad={7}>
              <Label $after={8}>横筋</Label>
              <Sep $after={2} />
              <Label $after={1}>钢筋类型:</Label>
              <Toggle>水平</Toggle>
              <Tool>垂直</Tool>
            </Strip>
          </ToolLine>
          <Canvas><Drawing /></Canvas>
          <ToolLine>
            <Strip $pad={2} $h={29}>
              <Toggle $pad={2}><Icon n="ortho" />正交</Toggle>
              <Tool><Icon n="dyn" />动态输入</Tool>
            </Strip>
            <Strip $pad={2} $h={29}>
              <Tool><Icon n="perp" />垂点</Tool>
              <Tool><Icon n="mid" />中点</Tool>
            </Strip>
          </ToolLine>
        </PageInner>
      </TabPage>
      <StatusLine>
        <StatusCell $w={97}>&nbsp;(X: 181 Y: 512)</StatusCell>
        <StatusCell>选择钢筋进行编辑，选择标注进行修改或移动;<Grip /></StatusCell>
      </StatusLine>
    </Client>
  </Dialog>
);

const PropsPanel = () => (
  <Props>
    <PropTab>属性编辑</PropTab>
    <GridFrame>
      <Grid>
        <thead><tr><th /><th>属性名称</th></tr></thead>
        <tbody>
          {rows.map(([n, text, tone], i) => (
            <tr key={n}>
              <RowHead $on={i === 0}>{n}</RowHead>
              <PropCell $tone={tone} $on={i === 0}><div>{n > 8 && <Plus aria-label="展开" />}<span><Mixed>{text}</Mixed></span></div></PropCell>
            </tr>
          ))}
        </tbody>
      </Grid>
    </GridFrame>
    <SectionEditor />
  </Props>
);

/* ---------- status bar and task bar ---------- */

const AppStatus = styled.footer`
  display: flex;
  gap: 2px;
  height: 20px;
  margin-top: 2px;
  flex: none;
`;

const TaskBar = styled.footer`
  height: 40px;
  flex: none;
  display: flex;
  background: #020b0f;
  color: #fff;
`;
const StartButton = styled.button`
  width: 48px;
  flex: none;
  display: grid;
  place-items: center;
  background: #000;
`;
const TaskSearch = styled.div`
  width: 348px;
  flex: none;
  display: flex;
  align-items: center;
  gap: 5px;
  padding: 0 16px 0 8px;
  background: #333;
  input { flex: 1; min-width: 0; font-size: 14px; }
  input::placeholder { color: #9c9c9c; opacity: 1; }
`;
const TaskButton = styled.button<{ $w: number; $run?: boolean; $on?: boolean }>`
  width: ${p => p.$w}px;
  flex: none;
  display: grid;
  place-items: center;
  background: ${p => (p.$on ? '#343e42' : 'none')};
  ${p => p.$run && css`
    background-image: linear-gradient(#76b9ed, #76b9ed);
    background-position: 50% 100%;
    background-size: ${p.$on ? '100%' : '29px'} 2px;
    background-repeat: no-repeat;
  `}
`;
const Handle = styled.span<{ $after: number }>`
  width: 4px;
  height: 16px;
  margin: 12px ${p => p.$after}px 12px 0;
  border: solid #3c4346;
  border-width: 0 1px;
  flex: none;
`;
const TwoLines = styled.div<{ $w: number; $right?: number }>`
  width: ${p => p.$w}px;
  margin-right: ${p => p.$right ?? 0}px;
  text-align: center;
  line-height: 17px;
  flex: none;
`;
const Tray = styled.div`
  margin-left: auto;
  display: flex;
  align-items: center;
`;
const TrayButton = styled.button<{ $w: number; $small?: boolean }>`
  width: ${p => p.$w}px;
  display: grid;
  place-items: center;
  font-size: ${p => (p.$small ? 12 : 14)}px;
`;
const Notice = styled.button`
  align-self: stretch;
  width: 55px;
  display: grid;
  place-items: center;
  background: #000;
  border-right: 1px solid #555;
`;

const Tk = ({ children, s = 24 }: { children: React.ReactNode; s?: number }) => <Svg viewBox="0 0 24 24" $w={s} $h={s} fill="none">{children}</Svg>;
const edgeE = 'M2 11C4 0 21-1 22 12v2H9c1 5 7 5 12 3v4C12 26 3 22 4 15c1-4 3-6 6-7-1 1-1 2-1 3h7c0-6-9-6-14 0z';
const ieE = 'M2 12C2 1 21 0 21 13H8c1 5 7 5 8 2h5C18 25 2 24 2 12zm6-2h8c-1-4-7-4-8 0z';

const Tasks = () => (
  <TaskBar>
    <StartButton aria-label="开始"><Svg viewBox="0 0 16 16" fill="#fff"><path d="M0 2.500l6.500-1v6H0zM7.500 1.300L16 0v7.500H7.500zM0 8.500h6.500v6l-6.500-1zM7.500 8.500H16V16l-8.500-1.300z" /></Svg></StartButton>
    <TaskSearch>
      <Tk s={23}><circle cx="12" cy="12" r="9.500" stroke="#fff" strokeWidth="2.500" /></Tk>
      <input aria-label="搜索" placeholder="在这里输入你要搜索的内容" />
      <Svg viewBox="0 0 16 16" fill="none" stroke="#999"><rect x="5.500" y=".5" width="5" height="9" rx="1" /><path d="M3 7v5h10V7M8 12v3M5 15.500h6" /></Svg>
    </TaskSearch>
    <TaskButton $w={40} aria-label="任务视图"><Tk><path d="M7 6h10v12H7zM5 8H2v8h3M19 8h3v8h-3" stroke="#fff" /></Tk></TaskButton>
    <TaskButton $w={60} aria-label="风扇"><Tk><g fill="#e6e6e6"><path d="M2 5c2-4 8-4 9 0v5c-3 3-9 2-9-2zM13 3c4-3 9 0 9 4s-4 5-8 4-3-5-1-8zM2 16c0-5 6-4 9-3 2 2 1 8-3 9s-6-2-6-6zM13 13c3-2 9-1 9 3s-4 7-8 6-2-6-1-9z" /></g><path d="M2 10c4 2 6-1 9 1M14 2c-3 4 0 6-2 9M22 14c-4-2-6 1-9-1M10 22c3-4 0-6 2-9" stroke="#020b0f" /></Tk></TaskButton>
    <TaskButton $w={44} aria-label="浏览器"><Tk><path d={ieE} fill="#e8e8e8" fillRule="evenodd" /><path d="M21 6c2-5-3-4-7-1M5 15c-6 9 0 8 5 5" stroke="#e8e8e8" strokeWidth="1.500" /></Tk></TaskButton>
    <TaskButton $w={60} aria-label="消息"><Svg viewBox="0 0 28 28" $w={28} $h={28} fill="none"><path d="M17 8C8 4 1 11 4 18c3 8 16 7 17-2 0-7-10-8-11-2 0 4 5 5 6 1M6 10c3-3 8-3 10 0M5 20c6 5 13 2 14-4" stroke="#d0d0d0" strokeWidth="1.300" /><path d="M22 1c5 0 4 5 4 8l2 3H16l2-3c0-3-1-8 4-8zM20 13h4" fill="#f0b414" stroke="#f0b414" /></Svg></TaskButton>
    <Handle $after={12} />
    <TaskButton $w={38} aria-label="Edge"><Tk><path d={edgeE} fill="#0a78d4" /></Tk></TaskButton>
    <TaskButton $w={38} aria-label="IE"><Tk><path d={ieE} fill="#3fa5ec" fillRule="evenodd" /><path d="M22 7c2-6-5-5-10-1M4 14c-6 10 1 8 5 5" stroke="#f2c43a" strokeWidth="1.800" /></Tk></TaskButton>
    <TaskButton $w={38} aria-label="文件资源管理器"><Tk><path d="M1 3h8l2 2h12v15H1z" fill="#fbe08a" /><path d="M1 3h8l2 2h12v2H1z" fill="#e8b93c" /><path d="M5 21v-8h14v8h-4v-4H9v4z" fill="#2f9be0" /></Tk></TaskButton>
    <TaskButton $w={37} $run aria-label="G"><Tk><path d="M24 2c-10-3-21-1-22 9s10 14 18 9c4-4 3-10-1-11-5-1-8 3-6 7-5 0-6-6-2-9 4-2 9 0 13-5z" fill="#1d9fe8" /></Tk></TaskButton>
    <TaskButton $w={38} $run aria-label="笔记"><Tk><rect width="24" height="24" rx="2" fill="#f59a1e" /><path d="M4 6l13-2 2 15-13 2z" fill="#fff7e0" /><path d="M7 10l8-1M7 13l8-1M8 16l5-1" stroke="#c07a30" /><path d="M21 3L11 17l-1 3 3-2L23 5z" fill="#8a3a10" /></Tk></TaskButton>
    <TaskButton $w={38} $run aria-label="帮助"><Tk><path d="M3 9h9v13H3z" fill="#eee" /><path d="M5 12h5M5 15h5M5 18h5" stroke="#333" /><path d="M11 6c0-6 10-5 8 1-1 3-4 3-4 6M15 15v3" stroke="#f5ea1a" strokeWidth="3" /></Tk></TaskButton>
    <TaskButton $w={39} $run aria-label="安全浏览器"><Tk><circle cx="11.500" cy="12.500" r="11" fill="#f0f8ec" /><circle cx="11.500" cy="12.500" r="9.500" fill="#4ab82e" /><path d="M5 13h13M18 12C17 5 6 5 6 13c0 7 9 7 11 3" stroke="#fff" strokeWidth="3" /><path d="M13 3c4-3 7-2 10-2-2 4-5 4-8 4z" fill="#3d9a24" /></Tk></TaskButton>
    <TaskButton $w={37} $run $on aria-label="广联达"><AppMark size={24} /></TaskButton>
    <Tray>
      <Handle $after={0} />
      <TrayButton $w={46} $small>链接</TrayButton>
      <TwoLines $w={66} $right={4}>43%<br />CPU使用</TwoLines>
      <TrayButton $w={26} aria-label="显示隐藏的图标"><Svg viewBox="0 0 16 16" stroke="#fff" fill="none" strokeWidth="1.300"><path d="M2 11l6-6 6 6" /></Svg></TrayButton>
      <TrayButton $w={23} aria-label="电池"><Svg viewBox="0 0 16 16" stroke="#fff" fill="none"><path d="M5 4.500h9.500v7H4V9M1 3v2c0 3 4 3 4 0V3M3 8v3M2 1v2M4 1v2M15.500 7v2" /><path d="M7 7h5v3H7z" fill="#fff" /></Svg></TrayButton>
      <TrayButton $w={24} aria-label="网络"><Svg viewBox="0 0 16 16" stroke="#ccc" fill="none"><path d="M2 14C2 7 7 3 14 3M5 14c0-5 4-8 9-8M8 14c0-3 3-5 6-5" /><circle cx="12.500" cy="13" r="1" fill="#fff" /></Svg></TrayButton>
      <TrayButton $w={23} aria-label="音量"><Svg viewBox="0 0 16 16" stroke="#fff" fill="none"><path d="M1 6h2l4-4v12l-4-4H1zM9 6c1 1 1 3 0 4M11 4c2 2 2 6 0 8M13 2c3 3 3 9 0 12" /></Svg></TrayButton>
      <TrayButton $w={32} aria-label="触摸键盘"><Svg viewBox="0 0 24 16" $w={24} stroke="#fff" fill="none"><path d="M1.500 2.500h21v11h-21z" /><path d="M4 5.500h16M4 8.500h16" strokeDasharray="2 1" /><path d="M6 11.500h12" /></Svg></TrayButton>
      <TrayButton $w={26}>中</TrayButton>
      <TrayButton $w={32} aria-label="输入法"><SogouMark size={16} /></TrayButton>
      <TwoLines $w={72}>20:41<br />2018/4/8</TwoLines>
      <Notice aria-label="通知">
        <Svg viewBox="0 0 24 24" $w={26} $h={26}><path d="M1 3h15v12H7l-3 3v-3H1z" fill="#fff" /><path d="M4 6h9M4 9h9M4 12h6" stroke="#000" /><circle cx="16" cy="17" r="7" fill="#3a3a3a" stroke="#888" /><text x="16" y="21" fill="#fff" fontSize="11" fontWeight="bold" textAnchor="middle">1</text></Svg>
      </Notice>
    </Tray>
  </TaskBar>
);

export default function App() {
  return (
    <Page>
      <Global />
      <TopBar />
      <Menu />
      <MainTools />
      <Main>
        <NavPanel />
        <Work>
          <PartTools />
          <Columns>
            <PartsPanel />
            <PropsPanel />
          </Columns>
        </Work>
      </Main>
      <AppStatus>
        <StatusCell $w={148} />
        <StatusCell $w={78}><Mixed>层高:4.5m</Mixed></StatusCell>
        <StatusCell $w={98}><Mixed>底标高:-0.05m</Mixed></StatusCell>
        <StatusCell $w={48}><Mixed>0</Mixed></StatusCell>
        <StatusCell>名称在当前层当前构件类型下不允许重名</StatusCell>
        <StatusCell $w={70}><Mixed>145.5 FPS</Mixed></StatusCell>
      </AppStatus>
      <Tasks />
    </Page>
  );
}
